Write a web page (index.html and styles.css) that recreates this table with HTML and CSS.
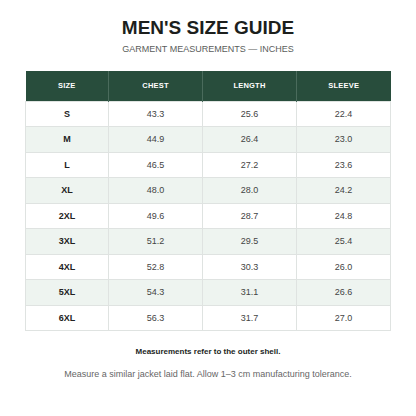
FILE: index.html
```html
<!DOCTYPE html>
<html>
<head>
    <title>Men's Size Guide</title>
    <link rel="stylesheet" href="styles.css">
</head>
<body>
    <div class="page">
        <h1 class="title">MEN'S SIZE GUIDE</h1>
        <p class="subtitle">GARMENT MEASUREMENTS — INCHES</p>

        <table class="sizes">
            <colgroup>
                <col class="col-size">
                <col class="col-num">
                <col class="col-num">
                <col class="col-num">
            </colgroup>
            <thead>
                <tr>
                    <th>SIZE</th>
                    <th>CHEST</th>
                    <th>LENGTH</th>
                    <th>SLEEVE</th>
                </tr>
            </thead>
            <tbody>
                <tr><td>S</td><td>43.3</td><td>25.6</td><td>22.4</td></tr>
                <tr><td>M</td><td>44.9</td><td>26.4</td><td>23.0</td></tr>
                <tr><td>L</td><td>46.5</td><td>27.2</td><td>23.6</td></tr>
                <tr><td>XL</td><td>48.0</td><td>28.0</td><td>24.2</td></tr>
                <tr><td>2XL</td><td>49.6</td><td>28.7</td><td>24.8</td></tr>
                <tr><td>3XL</td><td>51.2</td><td>29.5</td><td>25.4</td></tr>
                <tr><td>4XL</td><td>52.8</td><td>30.3</td><td>26.0</td></tr>
                <tr><td>5XL</td><td>54.3</td><td>31.1</td><td>26.6</td></tr>
                <tr><td>6XL</td><td>56.3</td><td>31.7</td><td>27.0</td></tr>
            </tbody>
        </table>

        <p class="note">Measurements refer to the outer shell.</p>
        <p class="hint">Measure a similar jacket laid flat. Allow 1–3 cm manufacturing tolerance.</p>
    </div>
</body>
</html>
```

FILE: styles.css
```css
* {
    box-sizing: border-box;
}

body {
    margin: 0;
    font-family: "Liberation Sans", Arial, sans-serif;
    background-color: #fff;
    color: #222;
}

.page {
    width: 416px;
    padding: 16px 25px 0;
    text-align: center;
}

.title {
    margin: 0;
    font-size: 19px;
    line-height: 24px;
    font-weight: bold;
    color: #1c1f1d;
}

.subtitle {
    margin: 3px 0 0;
    font-size: 9px;
    line-height: 12px;
    color: #5a5d5b;
}

.sizes {
    width: 366px;
    margin-top: 16px;
    border-collapse: collapse;
    table-layout: fixed;
}

.col-size {
    width: 83px;
}

.col-num {
    width: 94px;
}

.sizes th {
    height: 30px;
    padding: 0;
    background-color: #284d3c;
    color: #fff;
    font-size: 7.5px;
    font-weight: bold;
    letter-spacing: 0.2px;
    border-left: 1px solid #4a6b5c;
}

.sizes th:first-child {
    border-left: none;
}

.sizes td {
    height: 25.5px;
    padding: 0;
    font-size: 9px;
    color: #444;
    border: 1px solid #dfe3e1;
}

.sizes td:first-child {
    font-weight: bold;
    color: #222;
}

.sizes tbody tr:nth-child(even) td {
    background-color: #eef4f0;
}

.note {
    margin: 16px 0 0;
    font-size: 8px;
    font-weight: bold;
    color: #1c1f1d;
}

.hint {
    margin: 13px 0 0;
    font-size: 9px;
    color: #666;
}
```
